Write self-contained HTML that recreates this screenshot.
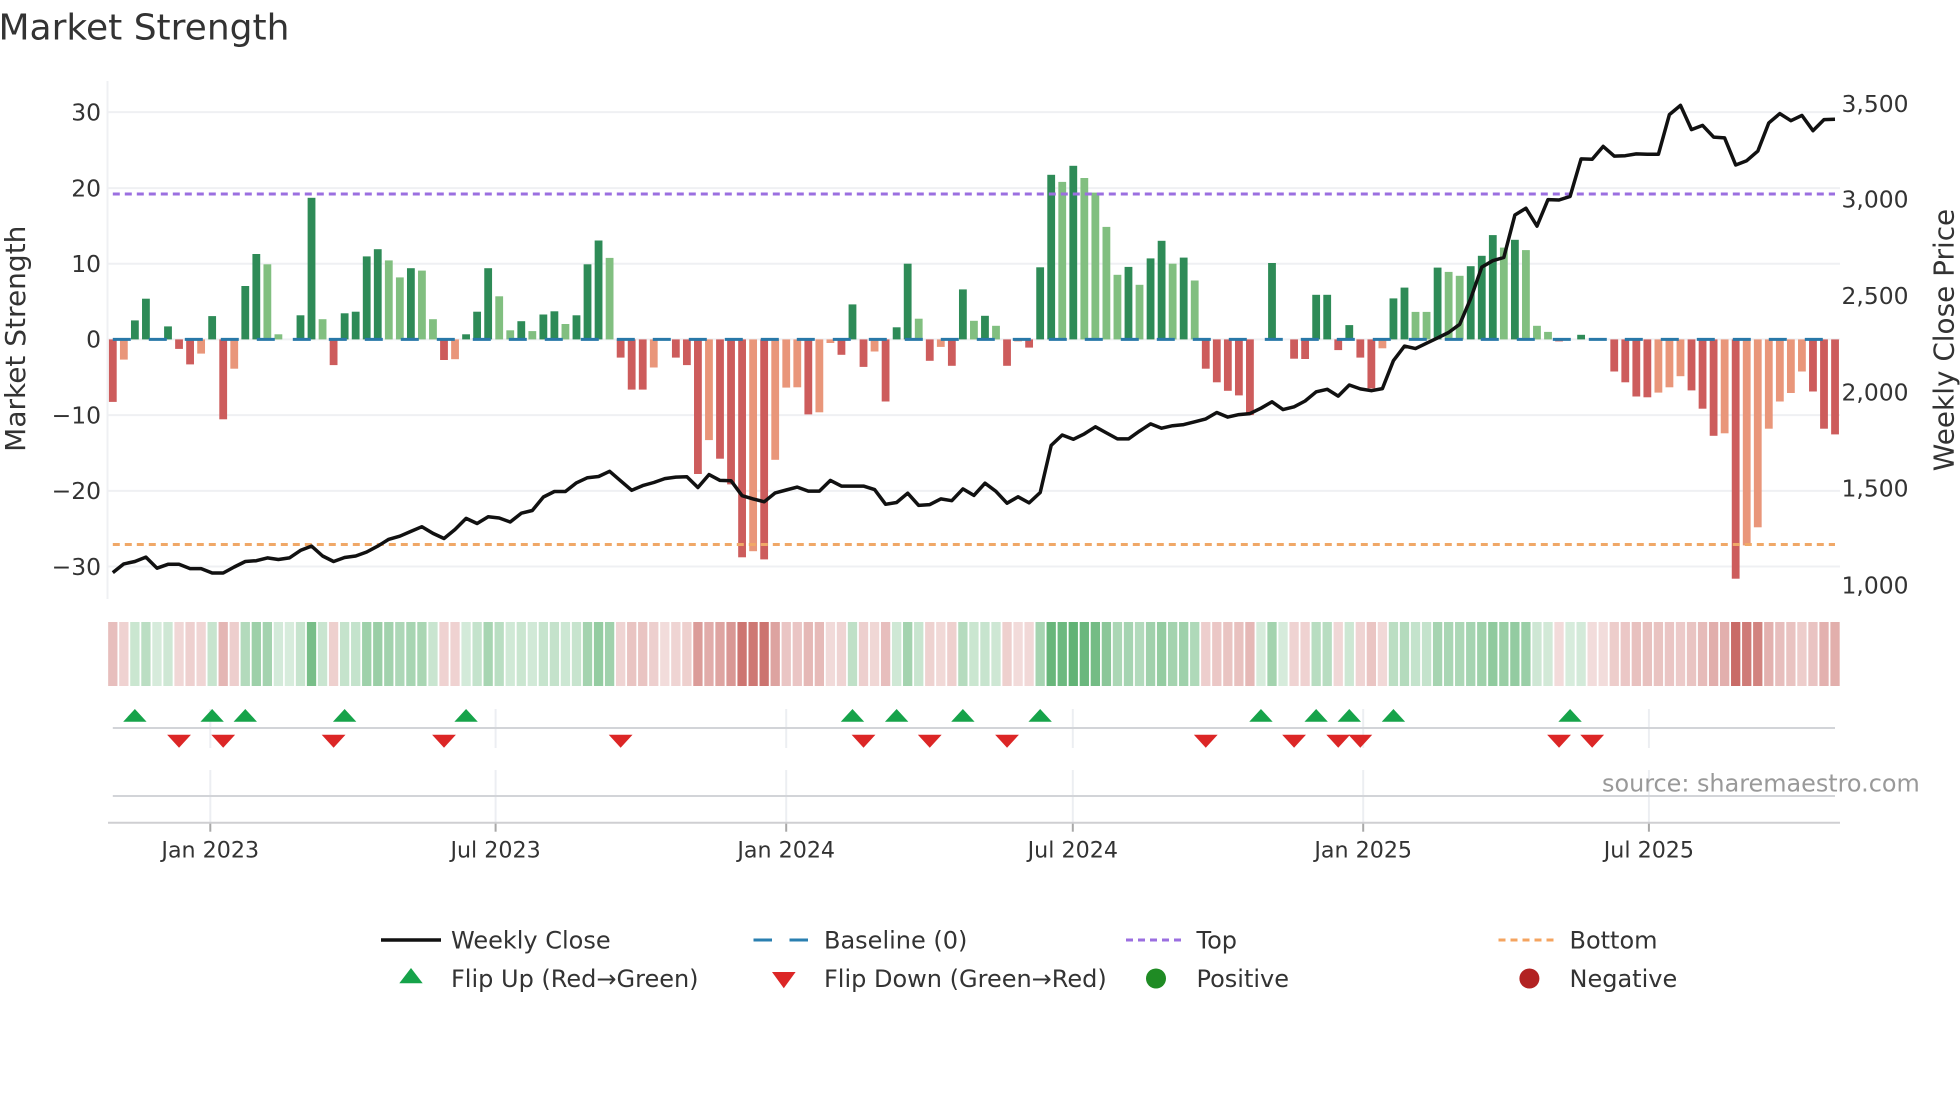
<!DOCTYPE html>
<html>
<head>
<meta charset="utf-8">
<title>Market Strength</title>
<style>
html,body{margin:0;padding:0;background:#fff;width:1960px;height:1102px;overflow:hidden}
svg{display:block;position:absolute;left:0;top:0}
text{font-family:"DejaVu Sans","Liberation Sans",sans-serif;fill:#333}
.t{font-size:23.4px}
.x{font-size:22.2px;text-anchor:middle}
.l{font-size:24px}
</style>
</head>
<body>
<svg id="c" xmlns="http://www.w3.org/2000/svg" width="1960" height="1102" viewBox="0 0 1960 1102">
<g id="under"></g>
<g id="bars"></g>
<g id="over"></g>
<text x="-1.5" y="39.5" style="font-size:36px">Market Strength</text>
<text class="t" text-anchor="end" x="101" y="120.7">30</text>
<text class="t" text-anchor="end" x="101" y="196.7">20</text>
<text class="t" text-anchor="end" x="101" y="272.2">10</text>
<text class="t" text-anchor="end" x="101" y="347.7">0</text>
<text class="t" text-anchor="end" x="101" y="423.7">−10</text>
<text class="t" text-anchor="end" x="101" y="499.2">−20</text>
<text class="t" text-anchor="end" x="101" y="575.2">−30</text>
<text class="t" x="1841.5" y="112">3,500</text>
<text class="t" x="1841.5" y="207.7">3,000</text>
<text class="t" x="1841.5" y="304.1">2,500</text>
<text class="t" x="1841.5" y="400.4">2,000</text>
<text class="t" x="1841.5" y="496.3">1,500</text>
<text class="t" x="1841.5" y="593.4">1,000</text>
<text transform="translate(25 338.7) rotate(-90)" text-anchor="middle" style="font-size:28px">Market Strength</text>
<text transform="translate(1953.5 340) rotate(-90)" text-anchor="middle" style="font-size:27.9px">Weekly Close Price</text>
<text class="x" x="210.3" y="857.5">Jan 2023</text>
<text class="x" x="495.6" y="857.5">Jul 2023</text>
<text class="x" x="786.2" y="857.5">Jan 2024</text>
<text class="x" x="1072.8" y="857.5">Jul 2024</text>
<text class="x" x="1363.2" y="857.5">Jan 2025</text>
<text class="x" x="1648.9" y="857.5">Jul 2025</text>
<text x="1602" y="791.5" style="font-size:23.9px;fill:#999">source: sharemaestro.com</text>
<line x1="381" y1="940" x2="441" y2="940" stroke="#111" stroke-width="3.4"/>
<text class="l" x="451" y="948.5">Weekly Close</text>
<polygon points="411,968 422.7,983.3 399.3,983.3" fill="#16a34a"/>
<text class="l" x="451" y="987">Flip Up (Red→Green)</text>
<line x1="753.5" y1="940" x2="808" y2="940" stroke="#2a7fb0" stroke-width="3" stroke-dasharray="18.5 17.5"/>
<text class="l" x="824" y="948.5">Baseline (0)</text>
<polygon points="772,972 795.6,972 783.8,988.3" fill="#dc2626"/>
<text class="l" x="824" y="987">Flip Down (Green→Red)</text>
<line x1="1126" y1="940" x2="1181" y2="940" stroke="#9b6fe0" stroke-width="3" stroke-dasharray="7 5"/>
<text class="l" x="1196.5" y="948.5">Top</text>
<circle cx="1156" cy="978.5" r="10" fill="#1f8b24"/>
<text class="l" x="1196.5" y="987">Positive</text>
<line x1="1498.5" y1="940" x2="1554" y2="940" stroke="#f4a460" stroke-width="3" stroke-dasharray="7 5"/>
<text class="l" x="1569.5" y="948.5">Bottom</text>
<circle cx="1529.4" cy="978.5" r="10" fill="#b22222"/>
<text class="l" x="1569.5" y="987">Negative</text>
</svg>
<script>
var V=[-62.5,-20.2,19,40.7,1,13,-9.5,-25,-14.2,23.3,-79.9,-29.3,53.4,85.4,75.1,5.1,.3,24.1,141.6,20.2,-25.7,26.1,27.7,83,90.2,79,62,71.2,68.8,20.2,-20.6,-19.8,5.1,27.7,71.2,43.1,9.1,18.2,8.3,24.9,28.1,15.4,24.1,75.1,98.9,81.5,-18.2,-50.2,-50.2,-28.1,-.5,-18.2,-25.7,-134.6,-100.7,-119.3,-145,-217.9,-211.8,-220,-120.4,-48.2,-47.9,-75,-72.9,-3.6,-15.4,35,-27.5,-12.1,-62.1,12.1,75.7,20.7,-21.4,-7.5,-26.4,50,18.6,23.6,13.6,-26.4,-2,-8.2,72.1,164.6,157.5,173.6,161.4,146.8,112.5,64.6,72.5,54.6,81,98.6,75.7,81.8,58.9,-29.3,-42.9,-51.4,-56,-75.7,.5,76.4,.5,-19.3,-19.6,44.6,44.6,-10.7,14.3,-18.2,-49,-8.9,41,51.8,27.5,27.5,71.8,67.5,63.6,73.2,83.6,104.3,91.8,99.6,89.3,13.6,7.5,-2,.3,4.6,-.3,-.3,-32.1,-42.9,-57.1,-57.9,-53.2,-47.9,-36.8,-51,-69.3,-96.4,-93.9,-239.3,-206,-187.9,-89.3,-62.1,-53.6,-32.1,-52.1,-89.3,-95];
var LT=[14,15,19,25,26,28,29,35,36,38,41,45,73,78,80,86,88,89,90,91,93,96,98,118,119,121,122,126,128,129,130,1,8,11,31,49,54,58,60,61,62,64,65,69,75,82,115,140,141,142,146,148,149,150,151,152,153];
var P=[572.6,563.9,561.5,557.1,568.2,564.3,564.3,568.6,568.6,573,573,567,561.5,560.7,557.9,559.5,557.9,550.4,546.1,556,561.5,557.5,556,552,546.1,539.3,536.2,531.4,526.7,533.4,538.5,529.5,518.4,523.5,516.8,518,522,513.2,510.5,497,491.5,491.5,482.8,477.7,476.5,471.3,480.8,490.3,485.6,482.5,478.6,477.1,476.8,487.5,474.6,480.4,480.7,495.7,498.9,501.8,492.9,490,487.1,491.1,491.1,480.4,486.1,486.1,486.1,489.6,504.3,502.5,493.2,505.4,504.6,498.9,500.7,488.9,495.4,483.2,491.4,503.2,496.8,502.9,492.5,445.4,435,439.3,433.9,426.8,432.9,438.9,438.9,431.1,423.9,428.2,425.7,424.6,421.8,418.9,412.5,417.1,414.6,413.6,408.2,401.8,409.6,406.8,401,391.8,389.3,396.1,385,388.9,390.7,388.6,360.7,346.1,348.6,343.2,337.9,332.5,324.3,298.6,267.1,260.7,257.5,215,208.2,226.1,199.6,200,196.4,158.9,159.3,146.4,156.1,155.7,153.9,154.3,154.3,114.6,105.4,129.6,125.4,137.1,137.9,165,160.7,151.1,122.9,113.6,120.7,115.4,130.7,119.6,119.3];
var UP=[2,9,12,21,32,67,71,77,84,104,109,112,116,132],DN=[6,10,20,30,46,68,74,81,99,107,111,113,131,134];
function X(i){return 112.8+11.04*i}
var Z=339.4,u='',b='',o='',i;
[112.1,188.1,263.8,415.1,490.9,566.5,339.4].forEach(function(y){u+='<line x1="108" x2="1840" y1="'+y+'" y2="'+y+'" stroke="#eff0f3" stroke-width="2"/>'});
u+='<line x1="107.5" x2="107.5" y1="81" y2="599" stroke="#eff0f3" stroke-width="2"/>';
[210.3,495.6,786.2,1072.8,1363.2,1648.9].forEach(function(x){
u+='<line x1="'+x+'" x2="'+x+'" y1="709" y2="748" stroke="#eceef2" stroke-width="2"/>';
u+='<line x1="'+x+'" x2="'+x+'" y1="770" y2="823" stroke="#eceef2" stroke-width="2"/>';
u+='<line x1="'+x+'" x2="'+x+'" y1="823" y2="831.7" stroke="#a8a8a8" stroke-width="2"/>';
});
u+='<line x1="112.8" x2="1835" y1="728" y2="728" stroke="#d2d4d8" stroke-width="2"/>';
u+='<line x1="112.8" x2="1835" y1="796" y2="796" stroke="#d2d4d8" stroke-width="2"/>';
u+='<line x1="108" x2="1840" y1="822.7" y2="822.7" stroke="#cfcfd2" stroke-width="2"/>';
for(i=0;i<V.length;i++){
var v=V[i],x=X(i),l=LT.indexOf(i)>=0,a,col;
if(v>=0){a=Math.min(.8,.2+.5*v/150);col='rgba(53,158,78,'+a.toFixed(3)+')'}
else{a=Math.min(.88,.2-.65*v/240);col='rgba(191,80,75,'+a.toFixed(3)+')'}
u+='<rect x="'+(x-4.65).toFixed(2)+'" y="622" width="9.3" height="64" fill="'+col+'"/>';
var c=v>=0?(l?'#81bf80':'#2e8b57'):(l?'#e9967a':'#cd5c5c');
if(Math.abs(v)>=.6){
b+='<rect x="'+(x-3.9).toFixed(2)+'" y="'+(v>=0?Z-v:Z).toFixed(2)+'" width="7.8" height="'+Math.abs(v).toFixed(2)+'" fill="'+c+'"/>';
}
}
o+='<line x1="112.8" x2="1835" y1="'+Z+'" y2="'+Z+'" stroke="#2878a8" stroke-width="3" stroke-dasharray="18 18"/>';
o+='<line x1="112.8" x2="1835" y1="194" y2="194" stroke="#9b6fe0" stroke-width="3" stroke-dasharray="7 5"/>';
o+='<line x1="112.8" x2="1835" y1="544.5" y2="544.5" stroke="#f0a868" stroke-width="3" stroke-dasharray="7 5"/>';
var pts=P.map(function(y,i){return X(i).toFixed(1)+','+y}).join(' ');
o+='<polyline points="'+pts+'" fill="none" stroke="#111" stroke-width="3.5" stroke-linejoin="round"/>';
UP.forEach(function(i){var x=X(i);o+='<polygon points="'+x+',709 '+(x+11.7)+',721.7 '+(x-11.7)+',721.7" fill="#16a34a"/>'});
DN.forEach(function(i){var x=X(i);o+='<polygon points="'+(x-11.9)+',734.7 '+(x+11.9)+',734.7 '+x+',747.7" fill="#dc2626"/>'});
document.getElementById('under').innerHTML=u;
document.getElementById('bars').innerHTML=b;
document.getElementById('over').innerHTML=o;
</script>
</body>
</html>
